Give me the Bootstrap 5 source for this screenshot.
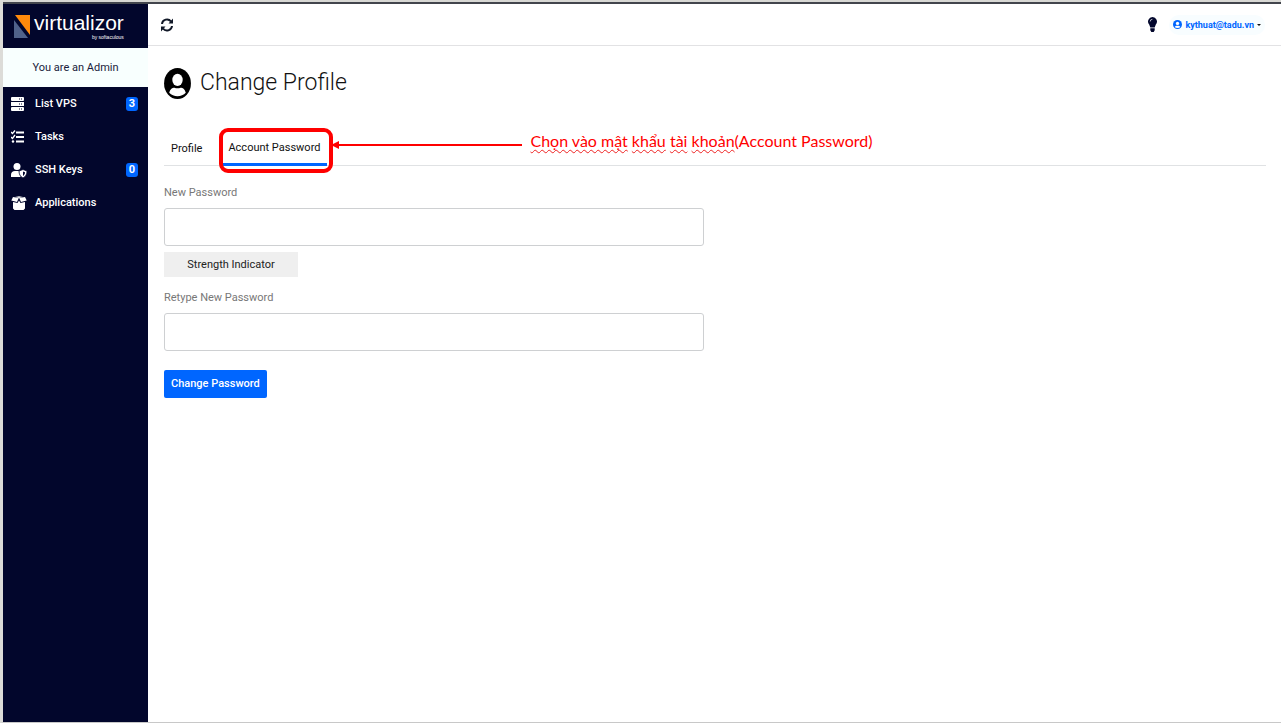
<!DOCTYPE html>
<html lang="en">
<head>
<meta charset="utf-8">
<meta name="viewport" content="width=device-width, initial-scale=1">
<title>Virtualizor - Change Profile</title>
<link href="https://cdn.jsdelivr.net/npm/bootstrap@5.3.0/dist/css/bootstrap.min.css" rel="stylesheet">
<style>
:root { --navy: #02062c; --blue: #0066ff; }
body { font-family: Roboto, "Noto Sans", sans-serif; font-size: 11px; line-height: 16px; color: #111; background: #fff; }
.frame { border-left: 3px solid #dcdcd8; border-bottom: 1px solid #c8c8c8; }
.frame-top { height: 4px; border-top: 2px solid #d8d8d4; background: #42454c; }
.sidebar { width: 145px; background: var(--navy); }
.brand { height: 44px; padding: 8px 0 0 11px; gap: 3px; color: #fff; }
.brand svg { margin-top: 2px; }
.brand-name { font-family: "Liberation Sans", sans-serif; font-size: 21px; line-height: 22px; }
.brand-by { font-family: "Liberation Sans", sans-serif; font-size: 5px; line-height: 6px; }
.role { height: 39px; background: #f8fffe; color: #1a1d3c; }
.side-link { height: 33px; padding: 0 10px 0 8px; color: #fff; font-weight: 500; text-decoration: none; }
.side-link svg { width: 16px; height: 16px; margin-right: 8px; flex: none; }
.count { background: var(--blue); color: #fff; font-weight: 700; line-height: 14px; padding: 0 3px; border-radius: 3px; }
.topbar { height: 42px; padding: 0 16px 0 12px; border-bottom: 1px solid #e2e2e4; }
.icon-btn { border: 0; background: none; padding: 0; color: var(--navy); line-height: 0; }
.user-pill { border: 0; background: #f8fdff; border-radius: 12px; padding: 4px; gap: 3px; color: var(--blue); font-size: 9px; line-height: 12px; font-weight: 700; }
.caret { border: 2px solid transparent; border-top-color: #111; border-bottom: 0; }
.page { padding: 20px 15px 0 16px; }
.page-title { font-size: 23px; line-height: 34px; font-weight: 300; gap: 9px; }
.tabs { margin-top: 30px; border-bottom: 1px solid #e0e2e4; gap: 12px; }
.tab-btn { display: block; border: 0; background: none; color: #111; padding: 10px 7px 8px; height: 35px; white-space: nowrap; }
.tab-btn.active { border-bottom: 3px solid var(--blue); margin-bottom: -1px; height: 36px; }
.mark-box { position: absolute; top: -2px; left: -2px; right: -6px; bottom: -8px; border: 4px solid #f00; border-radius: 9px; pointer-events: none; }
.note { position: absolute; left: 100%; top: 0; margin-left: 4px; color: #f00; font: 16px/22px Lato, "Open Sans", sans-serif; white-space: nowrap; gap: 8px; }
.note svg { margin-top: 10px; }
.note u { text-decoration: underline wavy #e22 1px; text-underline-offset: 2px; text-decoration-skip-ink: none; }
.form-area { width: 49%; margin-top: 19px; }
.form-area label { color: #777; line-height: 16px; margin-bottom: 7px; display: block; }
.form-area .form-control { height: 38px; border-color: #ced0d2; border-radius: 3px; }
.strength { width: 134px; line-height: 25px; margin: 6px 0 13px; background: #efefef; color: #222; }
.save { margin-top: 19px; background: var(--blue); color: #fff; border: 0; border-radius: 2px; padding: 6px 7px; font-weight: 500; }
</style>
</head>
<body>
<div class="frame min-vh-100 d-flex flex-column">
  <div class="frame-top"></div>
  <div class="d-flex flex-grow-1">
    <aside class="sidebar flex-shrink-0">
      <div class="brand d-flex align-items-start">
        <svg width="17" height="24" viewBox="0 0 17 24" aria-hidden="true"><path d="M1 1h15v20z" fill="#ff8a0c"/><path d="M0 6l14 18H0z" fill="#50628a"/></svg>
        <div><div class="brand-name">virtualizor</div><div class="brand-by text-end">by softaculous</div></div>
      </div>
      <div class="role d-flex align-items-center justify-content-center">You are an Admin</div>
      <nav>
        <a class="side-link d-flex align-items-center" href="#">
          <svg viewBox="0 0 16 16" fill="#fff"><rect x="0" y="1" width="13" height="4" rx="1"/><rect x="0" y="6" width="13" height="4"/><rect x="0" y="11" width="13" height="4" rx="1"/><path d="M8 3h4M8 8h4M8 13h4" stroke="#02062c" stroke-dasharray="1 1"/></svg>
          <span>List VPS</span><span class="count ms-auto">3</span></a>
        <a class="side-link d-flex align-items-center" href="#">
          <svg viewBox="0 0 16 16" fill="none" stroke="#fff"><path d="M5 3.500h8M5 8h8M5 12.500h8" stroke-width="1.800"/><path d="M0 3l1.500 1.500L4 1.500M0 8l1.500 1.500L4 6" stroke-width="1.300"/><circle cx="2" cy="12.500" r="1.200" fill="#fff" stroke="none"/></svg>
          <span>Tasks</span></a>
        <a class="side-link d-flex align-items-center" href="#">
          <svg viewBox="0 0 16 16" fill="#fff"><circle cx="6" cy="4.500" r="3.500"/><path d="M0 15v-2c0-2.500 1.500-4 4-4h4c.6 0 1 .1 1.500.3V15z"/><path d="M12 7.500l4 1.500c0 3-1 5.500-4 7-3-1.500-4-4-4-7z" stroke="#02062c" stroke-width=".8"/><path d="M12 9.500v4.500c1.400-1 2-2.200 2-3.800z" fill="#02062c"/></svg>
          <span>SSH Keys</span><span class="count ms-auto">0</span></a>
        <a class="side-link d-flex align-items-center" href="#">
          <svg viewBox="0 0 16 16" fill="#fff"><path d="M2 2l5.800 1L6 7 .3 5.500zM14 2L8.200 3 10 7l5.700-1.500z"/><path d="M2 7l4.500 1L8 5.500 9.500 8 14 7v6.500L12.500 15h-9L2 13.500z"/><path d="M4 2l4-.7 4 .7-4 1z"/></svg>
          <span>Applications</span></a>
      </nav>
    </aside>
    <div class="flex-grow-1">
      <header class="topbar d-flex align-items-center">
        <button class="icon-btn" type="button" aria-label="Refresh"><svg width="14" height="14" viewBox="0 0 14 14" fill="none" stroke="#111827" stroke-width="2"><path d="M2 6a5 5 0 0 1 9-2.500M12 8a5 5 0 0 1-9 2.500"/><path d="M13 .5V5.500H8.500zM1 13.500V8.500h4.500z" fill="#111827" stroke="none"/></svg></button>
        <button class="icon-btn ms-auto me-2 pe-1" type="button" aria-label="Tips"><svg width="9" height="15" viewBox="0 0 9 15"><path d="M4.500 0a4.500 4.500 0 0 1 3.300 7.500L6.700 10.500H2.300L1.200 7.500A4.500 4.500 0 0 1 4.500 0zM2.300 11.300h4.400v2L5.700 15H3.300l-1-1.700z" fill="#02062c"/><path d="M2.200 4.500a2.200 2.200 0 0 1 2.200-2.200" fill="none" stroke="#fff" stroke-width=".7"/></svg></button>
        <button class="user-pill d-flex align-items-center" type="button"><svg width="9" height="9" viewBox="0 0 16 16" aria-hidden="true"><circle cx="8" cy="8" r="8" fill="#06f"/><circle cx="8" cy="6" r="3" fill="#fff"/><path d="M3 12.500c1-3 9-3 10 0-2.500 2.500-7.500 2.500-10 0z" fill="#fff"/></svg>kythuat@tadu.vn<span class="caret"></span></button>
      </header>
      <main class="page">
        <h1 class="page-title d-flex align-items-center mb-0">
          <svg width="27" height="31" viewBox="0 0 26 30" aria-hidden="true"><ellipse cx="13" cy="15" rx="13" ry="15"/><ellipse cx="13" cy="11.500" rx="5" ry="6" fill="#fff"/><path d="M5 24c1-4 3-5 5-5 2 .8 4 .8 6 0 2 0 4 1 5 5-4 4.500-12 4.500-16 0z" fill="#fff"/></svg>
          Change Profile</h1>
        <div class="tabs d-flex" role="tablist">
          <button class="tab-btn" type="button" role="tab">Profile</button>
          <div class="position-relative">
            <button class="tab-btn active" type="button" role="tab" aria-selected="true">Account Password</button>
            <div class="mark-box"></div>
            <div class="note d-flex">
              <svg width="191" height="10" viewBox="0 0 191 10" aria-hidden="true"><path d="M0 5l8-4v8z" fill="red"/><path d="M7 5h184" stroke="red" stroke-width="2"/></svg>
              <span><u>Chọn vào mật</u> <u>khẩu</u> <u>tài</u> <u>khoản</u>(Account Password)</span>
            </div>
          </div>
        </div>
        <form class="form-area">
          <label for="newpass">New Password</label>
          <input class="form-control" type="password" id="newpass">
          <div class="strength text-center">Strength Indicator</div>
          <label for="retype">Retype New Password</label>
          <input class="form-control" type="password" id="retype">
          <button class="save" type="button">Change Password</button>
        </form>
      </main>
    </div>
  </div>
</div>
<script src="https://cdn.jsdelivr.net/npm/bootstrap@5.3.0/dist/js/bootstrap.bundle.min.js"></script>
</body>
</html>
